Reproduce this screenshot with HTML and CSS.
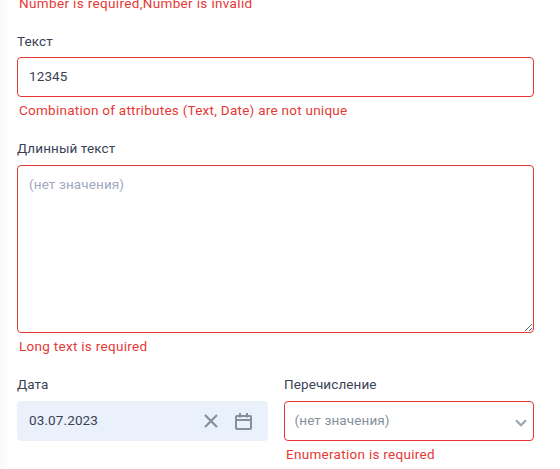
FILE: index.html
```
<!DOCTYPE html>
<html lang="ru">
<head>
<meta charset="utf-8">
<title>Форма</title>
<link rel="stylesheet" href="styles.css">
</head>
<body>
<main class="form">
  <p class="error error-top"><span class="t-number">Number is required,Number is invalid</span></p>
  <section class="field field-text">
    <label class="label label-text" for="text">Текст</label>
    <input class="control invalid" id="text" type="text" value="12345">
    <p class="error"><span class="t-combination">Combination of attributes (Text, Date) are not unique</span></p>
  </section>
  <section class="field field-long">
    <label class="label" for="long">Длинный текст</label>
    <textarea class="control invalid area" id="long" placeholder="(нет значения)"></textarea>
    <p class="error"><span class="t-required">Long text is required</span></p>
  </section>
  <div class="row">
    <section class="field">
      <div class="label">Дата</div>
      <div class="control date">
        <span class="value">03.07.2023</span>
        <svg class="clear" width="14" height="14" viewBox="0 0 14 14"><path d="M1 1 13 13M13 1 1 13"/></svg>
        <svg class="calendar" width="17" height="17" viewBox="0 0 17 17"><rect x="1" y="3" width="15" height="13" rx="1"/><path d="M1 7h15M5 0v4.5M12 0v4.5"/></svg>
      </div>
    </section>
    <section class="field">
      <div class="label">Перечисление</div>
      <div class="control invalid select">
        <span class="empty">(нет значения)</span>
        <svg class="chevron" width="12" height="8" viewBox="0 0 12 8"><path d="M1 1.2 6 6.2 11 1.2"/></svg>
      </div>
      <p class="error"><span class="t-required">Enumeration is required</span></p>
    </section>
  </div>
</main>
</body>
</html>
```
FILE: styles.css
```
* { box-sizing: border-box; }
body {
  margin: 0;
  height: 469px;
  overflow: hidden;
  background: linear-gradient(90deg, #fafafa 0, #fcfcfc 5px, #fff 9px);
  font: 13.5px/18px Roboto, "Liberation Sans", sans-serif;
  color: #3b4256;
}
.form { width: 534px; padding-left: 17px; }
p { margin: 0; }
.label { display: block; height: 18px; margin-bottom: 8px; letter-spacing: .1px; white-space: nowrap; }
.label-text { margin-bottom: 7px; }
.error { height: 18px; padding-left: 2px; color: #e53935; white-space: nowrap; }
.error-top { margin-top: -6px; }
.t-number { letter-spacing: .35px; }
.t-combination { letter-spacing: .26px; }
.t-required { letter-spacing: .29px; }
.field-text { margin-top: 20px; }
.field-long { margin-top: 20px; }
.control {
  display: block;
  width: 100%;
  height: 40px;
  margin: 0 0 4px;
  padding: 0 11px 2px;
  border: 1px solid transparent;
  border-radius: 4px;
  outline: 0;
  background: #fff;
  color: inherit;
  font: inherit;
  letter-spacing: .12px;
}
.invalid { border-color: #e53935; }
.area { height: 168px; padding: 9px 11px; resize: vertical; }
.area::placeholder { color: #9fa8bf; opacity: 1; }
.row { display: grid; grid-template-columns: 251px 250px; gap: 16px; margin-top: 20px; }
.date, .select { display: flex; align-items: center; }
.date { padding-right: 15px; background: #eaf1fb; }
.value, .empty { margin-right: auto; }
.select { padding: 0 6px 2px 9.5px; }
.empty { color: #84909b; }
svg { fill: none; stroke: #84909b; stroke-width: 2; }
.clear { margin: 2px 17px 0 0; stroke-width: 2.2; }
.calendar { margin-top: 3px; }
.chevron { margin-top: 5px; stroke: #9ba6b0; stroke-width: 2.2; }
```
